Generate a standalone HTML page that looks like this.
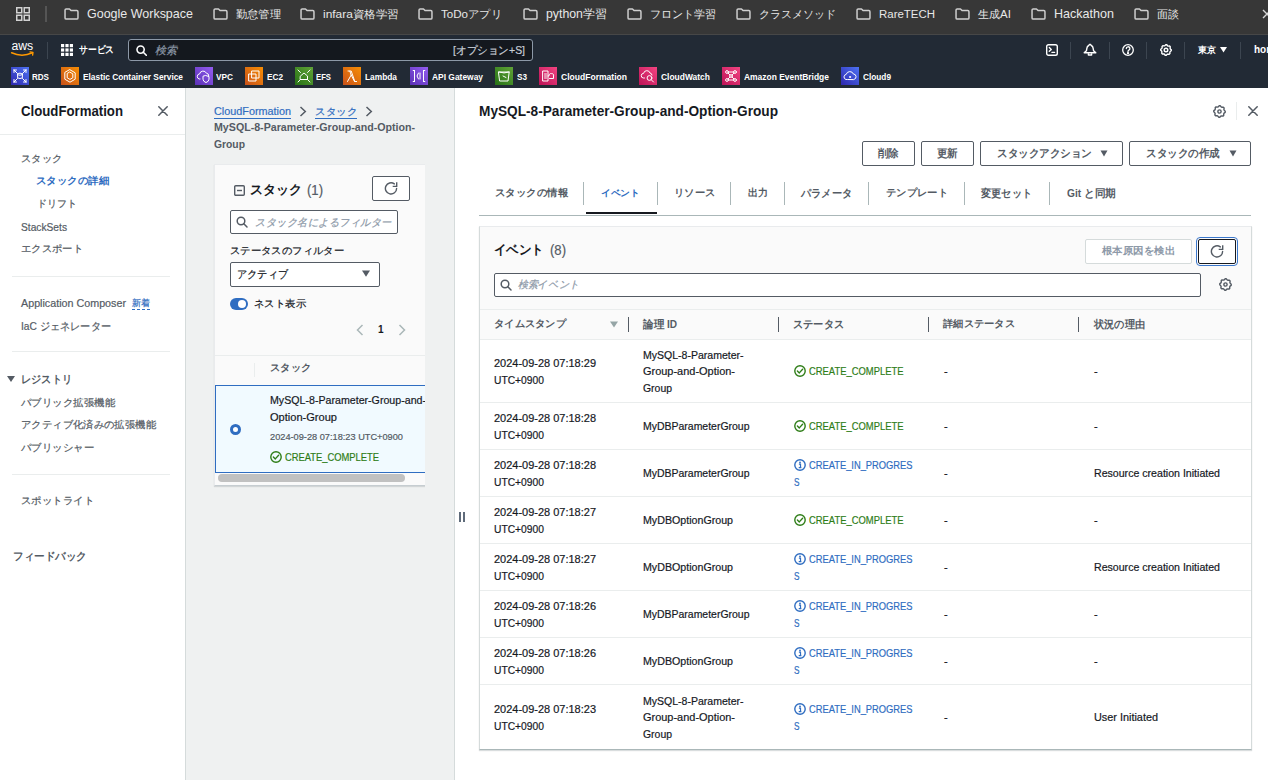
<!DOCTYPE html><html lang="ja"><head>
<meta charset="utf-8">
<style>
*{box-sizing:border-box;margin:0;padding:0}
html,body{width:1268px;height:780px;overflow:hidden;background:#fff;font-family:"Liberation Sans",sans-serif;color:#16191f}
.a{position:absolute;white-space:nowrap}
#chrome{position:absolute;left:0;top:0;width:1268px;height:35px;background:#373737}
#nav{position:absolute;left:0;top:35px;width:1268px;height:53px;background:#222a35}
.bm{position:absolute;top:1px;height:27px;line-height:27px;font-size:13px;color:#e8e8e8}
.fold{position:absolute;top:9px;width:16px;height:11px}
#side{position:absolute;left:0;top:88px;width:186px;height:692px;background:#fff;border-right:1px solid #d5dbdb}
#mid{position:absolute;left:186px;top:88px;width:269px;height:692px;background:#eff1f1}
#right{position:absolute;left:454px;top:88px;width:814px;height:692px;background:#fff;border-left:1px solid #d5dbdb}
.si{position:absolute;font-size:11px;color:#545b64;white-space:nowrap}
.btn{position:absolute;border:1px solid #545b64;background:#fff;font-size:11.5px;font-weight:bold;color:#545b64;text-align:center;border-radius:2px}
.tab{position:absolute;top:185px;font-size:12px;font-weight:bold;color:#545b64;white-space:nowrap}
.tdiv{position:absolute;top:182px;width:1px;height:23px;background:#aab7b8}
.th{position:absolute;top:317px;font-size:12px;font-weight:bold;color:#545b64;white-space:nowrap}
.hdiv{position:absolute;top:317px;width:1px;height:15px;background:#545b64}
.rl{position:absolute;left:479px;width:772px;height:1px;background:#eaeded}
.c1{position:absolute;left:494px;font-size:11px;line-height:17px;color:#16191f;white-space:nowrap}
.c2{position:absolute;left:643px;font-size:11px;line-height:17px;color:#16191f;white-space:nowrap}
.c3{position:absolute;left:793px;font-size:11px;line-height:17px;white-space:nowrap}
.c4{position:absolute;left:943px;font-size:11px;line-height:17px;color:#16191f}
.c5{position:absolute;left:1093px;font-size:11px;line-height:17px;color:#16191f;white-space:nowrap}
.a{-webkit-text-stroke:0.2px currentColor}
[style*="font-weight:bold"],[style*="font-weight: bold"]{-webkit-text-stroke:0}
.ok{color:#2e7d17}
.ip{color:#2f6dc1}
</style>
</head>
<body>
<!-- chrome bookmarks bar -->
<div id="chrome"><div class="a" style="left:0;top:34px;width:1268px;height:1px;background:#474747"></div><svg class="a" style="left:15px;top:6px" width="16" height="16" viewBox="0 0 16 16" fill="none" stroke="#d2d2d2" stroke-width="1.5"><rect x="1.75" y="1.75" width="5" height="5"></rect><rect x="9.25" y="1.75" width="5" height="5"></rect><rect x="1.75" y="9.25" width="5" height="5"></rect><rect x="9.25" y="9.25" width="5" height="5"></rect></svg><div class="a" style="left:45px;top:6px;width:2px;height:16px;background:#555"></div><svg class="a" style="left:63px;top:8px" width="17" height="12" viewBox="0 0 17 13"><path d="M1.5 2.2 Q1.5 1 2.7 1 H6.3 L8 2.8 H14.3 Q15.5 2.8 15.5 4 V10.8 Q15.5 12 14.3 12 H2.7 Q1.5 12 1.5 10.8 Z" fill="none" stroke="#cfcfcf" stroke-width="1.6" stroke-linejoin="round"></path></svg><div class="bm" style="left: 87px; font-size: 12.49px;">Google Workspace</div><svg class="a" style="left:212px;top:8px" width="17" height="12" viewBox="0 0 17 13"><path d="M1.5 2.2 Q1.5 1 2.7 1 H6.3 L8 2.8 H14.3 Q15.5 2.8 15.5 4 V10.8 Q15.5 12 14.3 12 H2.7 Q1.5 12 1.5 10.8 Z" fill="none" stroke="#cfcfcf" stroke-width="1.6" stroke-linejoin="round"></path></svg><div class="bm" style="left: 236px; font-size: 10.79px; transform: scaleX(1.0227); transform-origin: 0px 50%;">勤怠管理</div><svg class="a" style="left:299px;top:8px" width="17" height="12" viewBox="0 0 17 13"><path d="M1.5 2.2 Q1.5 1 2.7 1 H6.3 L8 2.8 H14.3 Q15.5 2.8 15.5 4 V10.8 Q15.5 12 14.3 12 H2.7 Q1.5 12 1.5 10.8 Z" fill="none" stroke="#cfcfcf" stroke-width="1.6" stroke-linejoin="round"></path></svg><div class="bm" style="left: 323px; font-size: 11.38px; transform: scaleX(1.0487); transform-origin: 0px 50%;">infara資格学習</div><svg class="a" style="left:417px;top:8px" width="17" height="12" viewBox="0 0 17 13"><path d="M1.5 2.2 Q1.5 1 2.7 1 H6.3 L8 2.8 H14.3 Q15.5 2.8 15.5 4 V10.8 Q15.5 12 14.3 12 H2.7 Q1.5 12 1.5 10.8 Z" fill="none" stroke="#cfcfcf" stroke-width="1.6" stroke-linejoin="round"></path></svg><div class="bm" style="left: 441px; font-size: 11.26px; transform: scaleX(1.0293); transform-origin: 0px 50%;">ToDoアプリ</div><svg class="a" style="left:522px;top:8px" width="17" height="12" viewBox="0 0 17 13"><path d="M1.5 2.2 Q1.5 1 2.7 1 H6.3 L8 2.8 H14.3 Q15.5 2.8 15.5 4 V10.8 Q15.5 12 14.3 12 H2.7 Q1.5 12 1.5 10.8 Z" fill="none" stroke="#cfcfcf" stroke-width="1.6" stroke-linejoin="round"></path></svg><div class="bm" style="left: 546px; font-size: 12.31px;">python学習</div><svg class="a" style="left:626px;top:8px" width="17" height="12" viewBox="0 0 17 13"><path d="M1.5 2.2 Q1.5 1 2.7 1 H6.3 L8 2.8 H14.3 Q15.5 2.8 15.5 4 V10.8 Q15.5 12 14.3 12 H2.7 Q1.5 12 1.5 10.8 Z" fill="none" stroke="#cfcfcf" stroke-width="1.6" stroke-linejoin="round"></path></svg><div class="bm" style="left: 650px; font-size: 11px;">フロント学習</div><svg class="a" style="left:735px;top:8px" width="17" height="12" viewBox="0 0 17 13"><path d="M1.5 2.2 Q1.5 1 2.7 1 H6.3 L8 2.8 H14.3 Q15.5 2.8 15.5 4 V10.8 Q15.5 12 14.3 12 H2.7 Q1.5 12 1.5 10.8 Z" fill="none" stroke="#cfcfcf" stroke-width="1.6" stroke-linejoin="round"></path></svg><div class="bm" style="left: 759px; font-size: 11px;">クラスメソッド</div><svg class="a" style="left:855px;top:8px" width="17" height="12" viewBox="0 0 17 13"><path d="M1.5 2.2 Q1.5 1 2.7 1 H6.3 L8 2.8 H14.3 Q15.5 2.8 15.5 4 V10.8 Q15.5 12 14.3 12 H2.7 Q1.5 12 1.5 10.8 Z" fill="none" stroke="#cfcfcf" stroke-width="1.6" stroke-linejoin="round"></path></svg><div class="bm" style="left: 879px; font-size: 11.46px;">RareTECH</div><svg class="a" style="left:954px;top:8px" width="17" height="12" viewBox="0 0 17 13"><path d="M1.5 2.2 Q1.5 1 2.7 1 H6.3 L8 2.8 H14.3 Q15.5 2.8 15.5 4 V10.8 Q15.5 12 14.3 12 H2.7 Q1.5 12 1.5 10.8 Z" fill="none" stroke="#cfcfcf" stroke-width="1.6" stroke-linejoin="round"></path></svg><div class="bm" style="left: 978px; font-size: 11.44px;">生成AI</div><svg class="a" style="left:1030px;top:8px" width="17" height="12" viewBox="0 0 17 13"><path d="M1.5 2.2 Q1.5 1 2.7 1 H6.3 L8 2.8 H14.3 Q15.5 2.8 15.5 4 V10.8 Q15.5 12 14.3 12 H2.7 Q1.5 12 1.5 10.8 Z" fill="none" stroke="#cfcfcf" stroke-width="1.6" stroke-linejoin="round"></path></svg><div class="bm" style="left: 1054px; font-size: 12.56px;">Hackathon</div><svg class="a" style="left:1133px;top:8px" width="17" height="12" viewBox="0 0 17 13"><path d="M1.5 2.2 Q1.5 1 2.7 1 H6.3 L8 2.8 H14.3 Q15.5 2.8 15.5 4 V10.8 Q15.5 12 14.3 12 H2.7 Q1.5 12 1.5 10.8 Z" fill="none" stroke="#cfcfcf" stroke-width="1.6" stroke-linejoin="round"></path></svg><div class="bm" style="left: 1157px; font-size: 11px;">面談</div><svg class="a" style="left:1262px;top:9px" width="10" height="10" viewBox="0 0 10 10" stroke="#d8d8d8" stroke-width="1.4"><path d="M1 1 L9 9 M9 1 L1 9"></path></svg></div>
<!-- aws nav -->
<div id="nav">
<svg class="a" style="left:10px;top:6px" width="26" height="18" viewBox="0 0 26 18"><text x="1.4" y="9.2" font-family="Liberation Sans" font-size="12.5" fill="#fff" textLength="21.8" lengthAdjust="spacingAndGlyphs">aws</text><path d="M1.6 11.8 Q12 16.6 22.4 11.8" fill="none" stroke="#f90" stroke-width="1.5" stroke-linecap="round"></path><path d="M20 10.9 L23 11.4 L22.6 14.2" fill="none" stroke="#f90" stroke-width="1.3" stroke-linecap="round" stroke-linejoin="round"></path></svg>
<div class="a" style="left:47px;top:7px;width:1px;height:17px;background:#3c4550"></div>
<svg class="a" style="left:61px;top:9px" width="12" height="12" viewBox="0 0 12 12" fill="#fff"><rect x="0" y="0" width="3.2" height="3.2"></rect><rect x="4.4" y="0" width="3.2" height="3.2"></rect><rect x="8.8" y="0" width="3.2" height="3.2"></rect><rect x="0" y="4.4" width="3.2" height="3.2"></rect><rect x="4.4" y="4.4" width="3.2" height="3.2"></rect><rect x="8.8" y="4.4" width="3.2" height="3.2"></rect><rect x="0" y="8.8" width="3.2" height="3.2"></rect><rect x="4.4" y="8.8" width="3.2" height="3.2"></rect><rect x="8.8" y="8.8" width="3.2" height="3.2"></rect></svg>
<div class="a" style="left: 79px; top: 7px; line-height: 16px; font-size: 10px; font-weight: bold; color: rgb(255, 255, 255); transform: scaleX(0.875); transform-origin: 0px 50%;">サービス</div>
<div class="a" style="left:128px;top:4px;width:405px;height:22px;background:#14181e;border:1px solid #8d99a8;border-radius:3px"></div>
<svg class="a" style="left:136px;top:10px" width="11" height="11" viewBox="0 0 11 11" fill="none" stroke="#fff" stroke-width="1.6"><circle cx="4.6" cy="4.6" r="3.6"></circle><path d="M7.3 7.3 L10.3 10.3" stroke-linecap="round"></path></svg>
<div class="a" style="left: 155px; top: 7px; line-height: 16px; font-size: 11px; font-style: italic; color: rgb(141, 153, 168); transform: scaleX(1); transform-origin: 0px 50%;">検索</div>
<div class="a" style="left: 453px; top: 7px; line-height: 16px; font-size: 10.79px; color: rgb(198, 204, 212); transform: scaleX(0.9666); transform-origin: 0px 50%;">[オプション+S]</div>
<svg class="a" style="left:1046px;top:9px" width="12" height="12" viewBox="0 0 12 12" fill="none" stroke="#fff" stroke-width="1.4"><rect x="0.7" y="0.7" width="10.6" height="10.6" rx="1.8"></rect><path d="M3.3 3.6 L5.3 5.4 L3.3 7.2 M6 8.4 H8.6" stroke-linecap="round" stroke-linejoin="round"></path></svg>
<div class="a" style="left:1070px;top:7px;width:1px;height:17px;background:#3c4550"></div>
<svg class="a" style="left:1083px;top:8px" width="14" height="14" viewBox="0 0 14 14" fill="none" stroke="#fff" stroke-width="1.4" stroke-linejoin="round"><path d="M7 1.2 L8.4 2.5 Q10 3.3 10.2 5.6 L10.6 7.8 L12.8 9.8 H1.2 L3.4 7.8 L3.8 5.6 Q4 3.3 5.6 2.5 Z"></path><path d="M5.4 10.2 V12 H8.6 V10.2"></path></svg>
<div class="a" style="left:1109px;top:7px;width:1px;height:17px;background:#3c4550"></div>
<svg class="a" style="left:1122px;top:9px" width="12" height="12" viewBox="0 0 12 12" fill="none" stroke="#fff" stroke-width="1.3"><circle cx="6" cy="6" r="5.3"></circle><path d="M4.3 4.6 A1.8 1.8 0 1 1 6.6 6.3 Q6 6.6 6 7.4 V7.6" stroke-linecap="round"></path><circle cx="6" cy="9.2" r="0.5" fill="#fff"></circle></svg>
<div class="a" style="left:1146px;top:7px;width:1px;height:17px;background:#3c4550"></div>
<svg class="a" style="left:1160px;top:9px" width="12" height="12" viewBox="0 0 12 12" fill="none" stroke="#fff" stroke-width="1.4"><path d="M5.74 0.71 L6.78 0.76 L7.52 1.76 L8.31 2.14 L9.56 2.07 L10.26 2.84 L10.07 4.08 L10.37 4.91 L11.29 5.74 L11.24 6.78 L10.24 7.52 L9.86 8.31 L9.93 9.56 L9.16 10.26 L7.92 10.07 L7.09 10.37 L6.26 11.29 L5.22 11.24 L4.48 10.24 L3.69 9.86 L2.44 9.93 L1.74 9.16 L1.93 7.92 L1.63 7.09 L0.71 6.26 L0.76 5.22 L1.76 4.48 L2.14 3.69 L2.07 2.44 L2.84 1.74 L4.08 1.93 L4.91 1.63 Z" stroke-linejoin="round"></path><circle cx="6" cy="6" r="1.8"></circle></svg>
<div class="a" style="left:1184px;top:7px;width:1px;height:17px;background:#3c4550"></div>
<div class="a" style="left:1198px;top:7px;line-height:16px;font-size:9px;font-weight:bold;color:#fff">東京</div>
<svg class="a" style="left:1220px;top:12px" width="7" height="6" viewBox="0 0 7 6" fill="#fff"><path d="M0 0 H7 L3.5 5.5Z"></path></svg>
<div class="a" style="left:1240px;top:7px;width:1px;height:17px;background:#3c4550"></div>
<div class="a" style="left:1254px;top:7px;line-height:16px;font-size:10px;font-weight:bold;color:#fff">hor</div>
<svg class="a" style="left:11px;top:32px" width="18" height="18" viewBox="0 0 18 18"><defs><linearGradient id="g0" x1="0" y1="1" x2="1" y2="0"><stop offset="0" stop-color="#2e27ad"></stop><stop offset="1" stop-color="#4d72f3"></stop></linearGradient></defs><rect width="18" height="18" fill="url(#g0)"></rect><g fill="none" stroke="#fff" stroke-width="1" stroke-linecap="round" stroke-linejoin="round"><path d="M3 3 L6.5 6.5 M3 3 H5.5 M3 3 V5.5 M15 3 L11.5 6.5 M15 3 H12.5 M15 3 V5.5 M3 15 L6.5 11.5 M3 15 H5.5 M3 15 V12.5 M15 15 L11.5 11.5 M15 15 H12.5 M15 15 V12.5"></path><ellipse cx="9" cy="7.2" rx="2.4" ry="1"></ellipse><path d="M6.6 7.2 V10.8 Q9 12.3 11.4 10.8 V7.2"></path></g></svg><div class="a" style="left: 32px; top: 33px; line-height: 17px; font-size: 9.6px; font-weight: bold; color: rgb(255, 255, 255); transform: scaleX(0.8389); transform-origin: 0px 50%;">RDS</div><svg class="a" style="left:61px;top:32px" width="18" height="18" viewBox="0 0 18 18"><defs><linearGradient id="g1" x1="0" y1="1" x2="1" y2="0"><stop offset="0" stop-color="#c8511b"></stop><stop offset="1" stop-color="#f78e04"></stop></linearGradient></defs><rect width="18" height="18" fill="url(#g1)"></rect><g fill="none" stroke="#fff" stroke-width="1" stroke-linecap="round" stroke-linejoin="round"><path d="M9 2.8 L14.2 5.8 V12.2 L9 15.2 L3.8 12.2 V5.8 Z"></path><path d="M9 5.2 L11.8 6.8 V10.8 L9 12.4 L6.2 10.8 V6.8 Z"></path></g></svg><div class="a" style="left: 83px; top: 33px; line-height: 17px; font-size: 9.6px; font-weight: bold; color: rgb(255, 255, 255); transform: scaleX(0.8681); transform-origin: 0px 50%;">Elastic Container Service</div><svg class="a" style="left:195px;top:32px" width="18" height="18" viewBox="0 0 18 18"><defs><linearGradient id="g2" x1="0" y1="1" x2="1" y2="0"><stop offset="0" stop-color="#5a30b5"></stop><stop offset="1" stop-color="#945df2"></stop></linearGradient></defs><rect width="18" height="18" fill="url(#g2)"></rect><g fill="none" stroke="#fff" stroke-width="1" stroke-linecap="round" stroke-linejoin="round"><path d="M5 12 H4.2 A2.6 2.6 0 0 1 4.6 6.9 A3.6 3.6 0 0 1 11.4 6.2 A2.6 2.6 0 0 1 13.8 9"></path><path d="M11 8.6 L14 9.6 V12.2 Q14 14.4 11 15.6 Q8 14.4 8 12.2 V9.6 Z"></path></g></svg><div class="a" style="left: 216px; top: 33px; line-height: 17px; font-size: 9.6px; font-weight: bold; color: rgb(255, 255, 255); transform: scaleX(0.8614); transform-origin: 0px 50%;">VPC</div><svg class="a" style="left:245px;top:32px" width="18" height="18" viewBox="0 0 18 18"><defs><linearGradient id="g3" x1="0" y1="1" x2="1" y2="0"><stop offset="0" stop-color="#c8511b"></stop><stop offset="1" stop-color="#f78e04"></stop></linearGradient></defs><rect width="18" height="18" fill="url(#g3)"></rect><g fill="none" stroke="#fff" stroke-width="1" stroke-linecap="round" stroke-linejoin="round"><rect x="4" y="7" width="7" height="7"></rect><rect x="7" y="4" width="7" height="7"></rect></g></svg><div class="a" style="left: 267px; top: 33px; line-height: 17px; font-size: 9.6px; font-weight: bold; color: rgb(255, 255, 255); transform: scaleX(0.8569); transform-origin: 0px 50%;">EC2</div><svg class="a" style="left:294.5px;top:32px" width="18" height="18" viewBox="0 0 18 18"><defs><linearGradient id="g4" x1="0" y1="1" x2="1" y2="0"><stop offset="0" stop-color="#277116"></stop><stop offset="1" stop-color="#60a337"></stop></linearGradient></defs><rect width="18" height="18" fill="url(#g4)"></rect><g fill="none" stroke="#fff" stroke-width="1" stroke-linecap="round" stroke-linejoin="round"><path d="M3 3 L5.5 5.5 M15 3 L12.5 5.5 M3 15 L5.5 12.5 M15 15 L12.5 12.5"></path><path d="M5.5 9 L9 6 L12.5 9 V12.5 H5.5 Z"></path></g></svg><div class="a" style="left: 316px; top: 33px; line-height: 17px; font-size: 9.6px; font-weight: bold; color: rgb(255, 255, 255); transform: scaleX(0.8033); transform-origin: 0px 50%;">EFS</div><svg class="a" style="left:343px;top:32px" width="18" height="18" viewBox="0 0 18 18"><defs><linearGradient id="g5" x1="0" y1="1" x2="1" y2="0"><stop offset="0" stop-color="#c8511b"></stop><stop offset="1" stop-color="#f78e04"></stop></linearGradient></defs><rect width="18" height="18" fill="url(#g5)"></rect><g fill="none" stroke="#fff" stroke-width="1" stroke-linecap="round" stroke-linejoin="round"><path d="M4.5 14.5 L8.2 8 L6.8 4 H5 M8.2 8 L11.5 14.5 H13.6 M6.8 4 H8.2 L11.8 14.5"></path></g></svg><div class="a" style="left: 365px; top: 33px; line-height: 17px; font-size: 9.6px; font-weight: bold; color: rgb(255, 255, 255); transform: scaleX(0.8696); transform-origin: 0px 50%;">Lambda</div><svg class="a" style="left:410px;top:32px" width="18" height="18" viewBox="0 0 18 18"><defs><linearGradient id="g6" x1="0" y1="1" x2="1" y2="0"><stop offset="0" stop-color="#5a30b5"></stop><stop offset="1" stop-color="#945df2"></stop></linearGradient></defs><rect width="18" height="18" fill="url(#g6)"></rect><g fill="none" stroke="#fff" stroke-width="1" stroke-linecap="round" stroke-linejoin="round"><path d="M4.5 3.5 V14.5 M13.5 3.5 V14.5 M3.2 3.5 H4.5 M3.2 14.5 H4.5 M13.5 3.5 H14.8 M13.5 14.5 H14.8 M8.5 6 L7 9 L8.5 12 M10 6 V12"></path></g></svg><div class="a" style="left: 432px; top: 33px; line-height: 17px; font-size: 9.6px; font-weight: bold; color: rgb(255, 255, 255); transform: scaleX(0.8774); transform-origin: 0px 50%;">API Gateway</div><svg class="a" style="left:495px;top:32px" width="18" height="18" viewBox="0 0 18 18"><defs><linearGradient id="g7" x1="0" y1="1" x2="1" y2="0"><stop offset="0" stop-color="#277116"></stop><stop offset="1" stop-color="#60a337"></stop></linearGradient></defs><rect width="18" height="18" fill="url(#g7)"></rect><g fill="none" stroke="#fff" stroke-width="1" stroke-linecap="round" stroke-linejoin="round"><path d="M3.8 5 H14.2 L13 14 H5 Z M3.8 5 Q9 7 14.2 5"></path><path d="M8 9 L11 10.5"></path></g></svg><div class="a" style="left: 517px; top: 33px; line-height: 17px; font-size: 9.6px; font-weight: bold; color: rgb(255, 255, 255); transform: scaleX(0.8511); transform-origin: 0px 50%;">S3</div><svg class="a" style="left:539px;top:32px" width="18" height="18" viewBox="0 0 18 18"><defs><linearGradient id="g8" x1="0" y1="1" x2="1" y2="0"><stop offset="0" stop-color="#bc1356"></stop><stop offset="1" stop-color="#f34482"></stop></linearGradient></defs><rect width="18" height="18" fill="url(#g8)"></rect><g fill="none" stroke="#fff" stroke-width="1" stroke-linecap="round" stroke-linejoin="round"><path d="M4 4 H9 V14 H4 Z M5.5 7 H7.5 M5.5 9 H7.5 M5.5 11 H7.5"></path><path d="M9 9 H10 A2 2 0 0 1 12.4 6.6 A1.8 1.8 0 0 1 14.5 9 V11.5 H10.5"></path></g></svg><div class="a" style="left: 561px; top: 33px; line-height: 17px; font-size: 9.6px; font-weight: bold; color: rgb(255, 255, 255); transform: scaleX(0.891); transform-origin: 0px 50%;">CloudFormation</div><svg class="a" style="left:639px;top:32px" width="18" height="18" viewBox="0 0 18 18"><defs><linearGradient id="g9" x1="0" y1="1" x2="1" y2="0"><stop offset="0" stop-color="#bc1356"></stop><stop offset="1" stop-color="#f34482"></stop></linearGradient></defs><rect width="18" height="18" fill="url(#g9)"></rect><g fill="none" stroke="#fff" stroke-width="1" stroke-linecap="round" stroke-linejoin="round"><path d="M5.5 11 H4.5 A2.3 2.3 0 0 1 4.6 6.4 A3.3 3.3 0 0 1 11 6 A2.3 2.3 0 0 1 13 8"></path><circle cx="10.5" cy="11" r="2.4"></circle><path d="M12.2 12.7 L14.5 15"></path></g></svg><div class="a" style="left: 661px; top: 33px; line-height: 17px; font-size: 9.6px; font-weight: bold; color: rgb(255, 255, 255); transform: scaleX(0.8811); transform-origin: 0px 50%;">CloudWatch</div><svg class="a" style="left:722px;top:32px" width="18" height="18" viewBox="0 0 18 18"><defs><linearGradient id="g10" x1="0" y1="1" x2="1" y2="0"><stop offset="0" stop-color="#bc1356"></stop><stop offset="1" stop-color="#f34482"></stop></linearGradient></defs><rect width="18" height="18" fill="url(#g10)"></rect><g fill="none" stroke="#fff" stroke-width="1" stroke-linecap="round" stroke-linejoin="round"><circle cx="5" cy="5" r="1.4"></circle><circle cx="13" cy="5" r="1.4"></circle><circle cx="5" cy="13" r="1.4"></circle><circle cx="13" cy="13" r="1.4"></circle><circle cx="9" cy="9" r="1.4"></circle><path d="M6 6 L8 8 M12 6 L10 8 M6 12 L8 10 M12 12 L10 10 M6.4 5 H11.6 M6.4 13 H11.6"></path></g></svg><div class="a" style="left: 744px; top: 33px; line-height: 17px; font-size: 9.6px; font-weight: bold; color: rgb(255, 255, 255); transform: scaleX(0.8808); transform-origin: 0px 50%;">Amazon EventBridge</div><svg class="a" style="left:841px;top:32px" width="18" height="18" viewBox="0 0 18 18"><defs><linearGradient id="g11" x1="0" y1="1" x2="1" y2="0"><stop offset="0" stop-color="#2e27ad"></stop><stop offset="1" stop-color="#4d72f3"></stop></linearGradient></defs><rect width="18" height="18" fill="url(#g11)"></rect><g fill="none" stroke="#fff" stroke-width="1" stroke-linecap="round" stroke-linejoin="round"><path d="M6 12.5 H5 A2.6 2.6 0 0 1 5.2 7.4 A3.8 3.8 0 0 1 12.4 7 A2.8 2.8 0 0 1 13 12.5 Z"></path><circle cx="9" cy="10" r="0.6"></circle></g></svg><div class="a" style="left: 863px; top: 33px; line-height: 17px; font-size: 9.6px; font-weight: bold; color: rgb(255, 255, 255); transform: scaleX(0.8611); transform-origin: 0px 50%;">Cloud9</div></div>
<!-- sidebar -->
<div id="side">
<div class="a" style="left: 21px; top: 14px; line-height: 18px; font-size: 14px; font-weight: bold; color: rgb(22, 25, 31); transform: scaleX(0.9435); transform-origin: 0px 50%;">CloudFormation</div>
<svg class="a" style="left:158px;top:18px" width="10" height="10" viewBox="0 0 10 10" stroke="#545b64" stroke-width="1.5" stroke-linecap="round"><path d="M0.8 0.8 L9.2 9.2 M9.2 0.8 L0.8 9.2"></path></svg>
<div class="a" style="left:0;top:46px;width:185px;height:1px;background:#eaeded"></div>
<div class="a" style="left: 21px; top: 63px; line-height: 16px; font-size: 9.79px; color: rgb(84, 91, 100); transform: scaleX(1.025); transform-origin: 0px 50%;">スタック</div>
<div class="a" style="left: 36px; top: 85px; line-height: 16px; font-size: 10.31px; font-weight: bold; color: rgb(47, 109, 193); transform: scaleX(1.0429); transform-origin: 0px 50%;">スタックの詳細</div>
<div class="a" style="left:37px;top:108px;line-height:16px;font-size:10px;color:#545b64">ドリフト</div>
<div class="a" style="left: 21px; top: 131px; line-height: 16px; font-size: 11px; color: rgb(84, 91, 100); transform: scaleX(0.9287); transform-origin: 0px 50%;">StackSets</div>
<div class="a" style="left: 21px; top: 153px; line-height: 16px; font-size: 10.03px; color: rgb(84, 91, 100); transform: scaleX(1.0333); transform-origin: 0px 50%;">エクスポート</div>
<div class="a" style="left:12px;top:188px;width:158px;height:1px;background:#eaeded"></div>
<div class="a" style="left: 21px; top: 207px; line-height: 16px; font-size: 11px; color: rgb(84, 91, 100); transform: scaleX(0.9756); transform-origin: 0px 50%;">Application Composer</div>
<div class="a" style="left:132px;top:207px;line-height:16px;font-size:9px;color:#2f6dc1">新着</div>
<div class="a" style="left:132px;top:221px;width:18px;height:0;border-top:1px dashed #2f6dc1"></div>
<div class="a" style="left: 21px; top: 230px; line-height: 16px; font-size: 11px; color: rgb(84, 91, 100); transform: scaleX(0.926); transform-origin: 0px 50%;">IaC ジェネレーター</div>
<div class="a" style="left:12px;top:263px;width:158px;height:1px;background:#eaeded"></div>
<svg class="a" style="left:7px;top:288px" width="8" height="6" viewBox="0 0 8 6" fill="#545b64"><path d="M0 0 H8 L4 6Z"></path></svg>
<div class="a" style="left: 21px; top: 283px; line-height: 16px; font-size: 10.61px; font-weight: bold; color: rgb(84, 91, 100); transform: scaleX(0.9273); transform-origin: 0px 50%;">レジストリ</div>
<div class="a" style="left: 21px; top: 307px; line-height: 16px; font-size: 10.36px; color: rgb(84, 91, 100); transform: scaleX(1.0444); transform-origin: 0px 50%;">パブリック拡張機能</div>
<div class="a" style="left: 21px; top: 329px; line-height: 16px; font-size: 10.18px; color: rgb(84, 91, 100); transform: scaleX(1.0385); transform-origin: 0px 50%;">アクティブ化済みの拡張機能</div>
<div class="a" style="left: 21px; top: 352px; line-height: 16px; font-size: 10.31px; color: rgb(84, 91, 100); transform: scaleX(1.0429); transform-origin: 0px 50%;">パブリッシャー</div>
<div class="a" style="left:12px;top:386px;width:158px;height:1px;background:#eaeded"></div>
<div class="a" style="left: 21px; top: 405px; line-height: 16px; font-size: 10.31px; color: rgb(84, 91, 100); transform: scaleX(1.0429); transform-origin: 0px 50%;">スポットライト</div>
<div class="a" style="left: 13px; top: 460px; line-height: 16px; font-size: 10.74px; font-weight: bold; color: rgb(84, 91, 100); transform: scaleX(0.961); transform-origin: 0px 50%;">フィードバック</div>
</div>
<div id="mid"></div>
<div class="a" style="left: 214px; top: 103px; line-height: 17px; font-size: 11.5px; color: rgb(47, 109, 193); transform: scaleX(0.941); transform-origin: 0px 50%;">CloudFormation</div>
<div class="a" style="left:214px;top:118px;width:77px;height:1px;background:#2f6dc1"></div>
<svg class="a" style="left:299px;top:106px" width="8" height="11" viewBox="0 0 8 11" fill="none" stroke="#545b64" stroke-width="1.5"><path d="M1.5 1 L6.3 5.5 L1.5 10"></path></svg>
<div class="a" style="left: 315px; top: 103px; line-height: 17px; font-size: 10.05px; color: rgb(47, 109, 193); transform: scaleX(1.05); transform-origin: 0px 50%;">スタック</div>
<div class="a" style="left:315px;top:118px;width:42px;height:1px;background:#2f6dc1"></div>
<svg class="a" style="left:365px;top:106px" width="8" height="11" viewBox="0 0 8 11" fill="none" stroke="#545b64" stroke-width="1.5"><path d="M1.5 1 L6.3 5.5 L1.5 10"></path></svg>
<div class="a" style="left: 214px; top: 119px; line-height: 17px; font-size: 11px; font-weight: bold; color: rgb(84, 91, 100); transform: scaleX(0.9673); transform-origin: 0px 50%;">MySQL-8-Parameter-Group-and-Option-</div>
<div class="a" style="left: 214px; top: 136px; line-height: 17px; font-size: 11px; font-weight: bold; color: rgb(84, 91, 100); transform: scaleX(0.9394); transform-origin: 0px 50%;">Group</div>
<div class="a" style="left:214px;top:164px;width:212px;height:322px;background:#fafafa;border:1px solid #e9ebed;border-right-color:#d5dbdb;border-bottom-color:#c6cdd1;box-shadow:0 1px 1px rgba(0,28,36,.12);overflow:hidden">
</div>
<svg class="a" style="left:234px;top:185px" width="11" height="11" viewBox="0 0 11 11" fill="none" stroke="#545b64" stroke-width="1.4"><rect x="0.7" y="0.7" width="9.6" height="9.6" rx="1"></rect><path d="M3 5.5 H8"></path></svg>
<div class="a" style="left: 250px; top: 180px; line-height: 20px; font-size: 13px; font-weight: bold; color: rgb(22, 25, 31);">スタック</div>
<div class="a" style="left: 307px; top: 180px; line-height: 20px; font-size: 14px; color: rgb(84, 91, 100); transform: scaleX(0.9343); transform-origin: 0px 50%;">(1)</div>
<div class="a" style="left:372px;top:176px;width:38px;height:25px;border:1px solid #545b64;background:#fff;border-radius:2px"></div>
<svg class="a" style="left:384px;top:181px" width="14" height="14" viewBox="0 0 14 14" fill="none" stroke="#545b64" stroke-width="1.4"><path d="M12.6 7.5 A5.6 5.6 0 1 1 10.3 2.9" stroke-linecap="round"></path><path d="M12.7 1.2 V5.4 H8.7" stroke-linejoin="miter" stroke-linecap="butt"></path></svg>
<div class="a" style="left:230px;top:210px;width:168px;height:24px;border:1px solid #545b64;background:#fff;border-radius:2px"></div>
<svg class="a" style="left:236px;top:216px" width="12" height="12" viewBox="0 0 12 12" fill="none" stroke="#545b64" stroke-width="1.5"><circle cx="5" cy="5" r="3.8"></circle><path d="M7.8 7.8 L11 11" stroke-linecap="round"></path></svg>
<div class="a" style="left: 255px; top: 214px; line-height: 16px; font-size: 10.64px; font-style: italic; color: rgb(141, 153, 168); transform: scaleX(0.958); transform-origin: 0px 50%;">スタック名によるフィルター</div>
<div class="a" style="left: 230px; top: 243px; line-height: 16px; font-size: 10.12px; color: rgb(22, 25, 31); transform: scaleX(1.0364); transform-origin: 0px 50%;">ステータスのフィルター</div>
<div class="a" style="left:230px;top:262px;width:150px;height:25px;border:1px solid #545b64;background:#fff;border-radius:2px"></div>
<div class="a" style="left: 237px; top: 266px; line-height: 16px; font-size: 10.61px; color: rgb(22, 25, 31); transform: scaleX(0.9273); transform-origin: 0px 50%;">アクティブ</div>
<svg class="a" style="left:362px;top:270px" width="8" height="7" viewBox="0 0 8 7" fill="#545b64"><path d="M0 0.5 H8 L4 6.8Z"></path></svg>
<div class="a" style="left:230px;top:298px;width:18px;height:12px;border-radius:6px;background:#2f6dc1"></div>
<div class="a" style="left:238px;top:300px;width:8px;height:8px;border-radius:4px;background:#fff"></div>
<div class="a" style="left: 254px; top: 296px; line-height: 16px; font-size: 10.23px; color: rgb(22, 25, 31); transform: scaleX(1.04); transform-origin: 0px 50%;">ネスト表示</div>
<svg class="a" style="left:356px;top:324px" width="8" height="12" viewBox="0 0 8 12" fill="none" stroke="#aab7b8" stroke-width="1.5"><path d="M6.5 1 L1.5 6 L6.5 11"></path></svg>
<div class="a" style="left:378px;top:322px;line-height:16px;font-size:10px;font-weight:bold;color:#16191f">1</div>
<svg class="a" style="left:398px;top:324px" width="8" height="12" viewBox="0 0 8 12" fill="none" stroke="#aab7b8" stroke-width="1.5"><path d="M1.5 1 L6.5 6 L1.5 11"></path></svg>
<div class="a" style="left:215px;top:355px;width:210px;height:1px;background:#eaeded"></div>
<div class="a" style="left:254px;top:363px;width:1px;height:14px;background:#eaeded"></div>
<div class="a" style="left: 270px; top: 360px; line-height: 16px; font-size: 9.79px; font-weight: bold; color: rgb(84, 91, 100); transform: scaleX(1.025); transform-origin: 0px 50%;">スタック</div>
<div class="a" style="left:215px;top:385px;width:215px;height:88px;background:#f1faff;border:1px solid #2f6dc1;border-right:none"></div>
<div class="a" style="left:230px;top:424px;width:10.5px;height:10.5px;border-radius:5.5px;border:3.6px solid #2f6dc1;background:#fff"></div>
<div class="a" style="left: 270px; top: 392px; line-height: 17px; font-size: 11px; color: rgb(22, 25, 31); transform: scaleX(0.9666); transform-origin: 0px 50%;">MySQL-8-Parameter-Group-and-</div>
<div class="a" style="left: 270px; top: 409px; line-height: 17px; font-size: 11px; color: rgb(22, 25, 31); transform: scaleX(1.0052); transform-origin: 0px 50%;">Option-Group</div>
<div class="a" style="left: 270px; top: 429px; line-height: 16px; font-size: 9.5px; color: rgb(84, 91, 100); transform: scaleX(0.9704); transform-origin: 0px 50%;">2024-09-28 07:18:23 UTC+0900</div>
<svg class="a" style="left:270px;top:451px" width="12" height="12" viewBox="0 0 12 12" fill="none" stroke="#2e7d17" stroke-width="1.4"><circle cx="6" cy="6" r="5.2"></circle><path d="M3.4 6.1 L5.3 7.9 L8.6 4.3" stroke-linecap="round" stroke-linejoin="round"></path></svg>
<div class="a" style="left: 285px; top: 449px; line-height: 16px; font-size: 11px; color: rgb(46, 125, 23); transform: scaleX(0.8512); transform-origin: 0px 50%;">CREATE_COMPLETE</div>
<div class="a" style="left:218px;top:474px;width:187px;height:8px;border-radius:4px;background:#c1c1c1"></div>
<div class="a" style="left:425px;top:88px;width:29px;height:692px;background:#eff1f1"></div>

<div id="right"></div>
<div class="a" style="left: 479px; top: 102px; line-height: 18px; font-size: 14px; font-weight: bold; color: rgb(22, 25, 31); transform: scaleX(0.9757); transform-origin: 0px 50%;">MySQL-8-Parameter-Group-and-Option-Group</div>
<svg class="a" style="left:1213px;top:105px" width="13" height="13" viewBox="0 0 12 12" fill="none" stroke="#545b64" stroke-width="1.3"><path d="M5.74 0.71 L6.78 0.76 L7.52 1.76 L8.31 2.14 L9.56 2.07 L10.26 2.84 L10.07 4.08 L10.37 4.91 L11.29 5.74 L11.24 6.78 L10.24 7.52 L9.86 8.31 L9.93 9.56 L9.16 10.26 L7.92 10.07 L7.09 10.37 L6.26 11.29 L5.22 11.24 L4.48 10.24 L3.69 9.86 L2.44 9.93 L1.74 9.16 L1.93 7.92 L1.63 7.09 L0.71 6.26 L0.76 5.22 L1.76 4.48 L2.14 3.69 L2.07 2.44 L2.84 1.74 L4.08 1.93 L4.91 1.63 Z" stroke-linejoin="round"></path><circle cx="6" cy="6" r="1.5"></circle></svg>
<div class="a" style="left:1236px;top:102px;width:1px;height:18px;background:#eaeded"></div>
<svg class="a" style="left:1248px;top:106px" width="10" height="10" viewBox="0 0 10 10" stroke="#545b64" stroke-width="1.5" stroke-linecap="round"><path d="M0.8 0.8 L9.2 9.2 M9.2 0.8 L0.8 9.2"></path></svg>
<div class="btn" style="left:862px;top:141px;width:53px;height:25px"></div>
<div class="a" style="left: 878px; top: 145px; line-height: 16px; font-size: 10.52px; font-weight: bold; color: rgb(84, 91, 100); transform: scaleX(0.9545); transform-origin: 0px 50%;">削除</div>
<div class="btn" style="left:921px;top:141px;width:53px;height:25px"></div>
<div class="a" style="left: 937px; top: 145px; line-height: 16px; font-size: 10.52px; font-weight: bold; color: rgb(84, 91, 100); transform: scaleX(0.9545); transform-origin: 0px 50%;">更新</div>
<div class="btn" style="left:980px;top:141px;width:143px;height:25px"></div>
<div class="a" style="left: 997px; top: 145px; line-height: 16px; font-size: 10.69px; font-weight: bold; color: rgb(84, 91, 100); transform: scaleX(0.9596); transform-origin: 0px 50%;">スタックアクション</div>
<svg class="a" style="left:1100px;top:150px" width="8" height="7" viewBox="0 0 8 7" fill="#545b64"><path d="M0.5 0.5 H7.5 L4 6.5Z"></path></svg>
<div class="btn" style="left:1129px;top:141px;width:122px;height:25px"></div>
<div class="a" style="left: 1146px; top: 145px; line-height: 16px; font-size: 10.74px; font-weight: bold; color: rgb(84, 91, 100); transform: scaleX(0.961); transform-origin: 0px 50%;">スタックの作成</div>
<svg class="a" style="left:1228.5px;top:150px" width="8" height="7" viewBox="0 0 8 7" fill="#545b64"><path d="M0.5 0.5 H7.5 L4 6.5Z"></path></svg>
<div class="a" style="left: 495px; top: 185px; line-height: 16px; font-size: 10.31px; font-weight: bold; color: rgb(84, 91, 100); transform: scaleX(1.0429); transform-origin: 0px 50%;">スタックの情報</div>
<div class="tdiv" style="left:583px"></div>
<div class="a" style="left: 601px; top: 185px; line-height: 16px; font-size: 9.27px; font-weight: bold; color: rgb(47, 109, 193); transform: scaleX(1.0833); transform-origin: 0px 50%;">イベント</div>
<div class="a" style="left:586px;top:212px;width:71px;height:2px;background:#16191f"></div>
<div class="tdiv" style="left:657px"></div>
<div class="a" style="left: 674px; top: 185px; line-height: 16px; font-size: 9.79px; font-weight: bold; color: rgb(84, 91, 100); transform: scaleX(1.025); transform-origin: 0px 50%;">リソース</div>
<div class="tdiv" style="left:730px"></div>
<div class="a" style="left:748px;top:185px;line-height:16px;font-size:10px;font-weight:bold;color:#545b64">出力</div>
<div class="tdiv" style="left:784px"></div>
<div class="a" style="left: 801px; top: 185px; line-height: 16px; font-size: 10.61px; font-weight: bold; color: rgb(84, 91, 100); transform: scaleX(0.9273); transform-origin: 0px 50%;">パラメータ</div>
<div class="tdiv" style="left:868px"></div>
<div class="a" style="left: 886px; top: 185px; line-height: 16px; font-size: 10.03px; font-weight: bold; color: rgb(84, 91, 100); transform: scaleX(1.0333); transform-origin: 0px 50%;">テンプレート</div>
<div class="tdiv" style="left:964px"></div>
<div class="a" style="left: 981px; top: 185px; line-height: 16px; font-size: 10.61px; font-weight: bold; color: rgb(84, 91, 100); transform: scaleX(0.9273); transform-origin: 0px 50%;">変更セット</div>
<div class="tdiv" style="left:1049px"></div>
<div class="a" style="left: 1067px; top: 185px; line-height: 16px; font-size: 10.5px; font-weight: bold; color: rgb(84, 91, 100); transform: scaleX(0.9703); transform-origin: 0px 50%;">Git と同期</div>
<div class="a" style="left:479px;top:215px;width:772px;height:1px;background:#aab7b8"></div>
<div class="a" style="left:479px;top:226px;width:773px;height:524px;background:#fff;border:1px solid #d5dbdb;border-top-color:#e9ebed;border-bottom-color:#aab7b8;box-shadow:0 1px 1px rgba(0,28,36,.15)"></div>
<div class="a" style="left:480px;top:227px;width:771px;height:112px;background:#fafafa"></div>
<div class="a" style="left:480px;top:309px;width:771px;height:1px;background:#eaeded"></div>
<div class="a" style="left: 494px; top: 240px; line-height: 20px; font-size: 12.52px; font-weight: bold; color: rgb(22, 25, 31); transform: scaleX(0.9615); transform-origin: 0px 50%;">イベント</div>
<div class="a" style="left: 550px; top: 240px; line-height: 20px; font-size: 14px; color: rgb(84, 91, 100); transform: scaleX(0.9343); transform-origin: 0px 50%;">(8)</div>
<div class="a" style="left:1085px;top:239px;width:107px;height:25px;border:1px solid #d5dbdb;background:#fff;border-radius:2px"></div>
<div class="a" style="left: 1102px; top: 243px; line-height: 16px; font-size: 10.31px; font-weight: bold; color: rgb(141, 153, 168); transform: scaleX(1.0429); transform-origin: 0px 50%;">根本原因を検出</div>
<div class="a" style="left:1196px;top:237px;width:42px;height:29px;border:1.5px solid #3a77cc;border-radius:4px"></div>
<div class="a" style="left:1198px;top:239px;width:38px;height:25px;border:1px solid #16191f;background:#fff;border-radius:2px"></div>
<svg class="a" style="left:1210px;top:244px" width="14" height="14" viewBox="0 0 14 14" fill="none" stroke="#545b64" stroke-width="1.4"><path d="M12.6 7.5 A5.6 5.6 0 1 1 10.3 2.9" stroke-linecap="round"></path><path d="M12.7 1.2 V5.4 H8.7" stroke-linejoin="miter" stroke-linecap="butt"></path></svg>
<div class="a" style="left:494px;top:273px;width:707px;height:24px;border:1px solid #545b64;background:#fff;border-radius:2px"></div>
<svg class="a" style="left:500px;top:279px" width="12" height="12" viewBox="0 0 12 12" fill="none" stroke="#545b64" stroke-width="1.5"><circle cx="5" cy="5" r="3.8"></circle><path d="M7.8 7.8 L11 11" stroke-linecap="round"></path></svg>
<div class="a" style="left: 518px; top: 277px; line-height: 16px; font-size: 10.34px; font-style: italic; color: rgb(141, 153, 168); transform: scaleX(0.9688); transform-origin: 0px 50%;">検索イベント</div>
<svg class="a" style="left:1219px;top:278px" width="13" height="13" viewBox="0 0 12 12" fill="none" stroke="#545b64" stroke-width="1.3"><path d="M5.74 0.71 L6.78 0.76 L7.52 1.76 L8.31 2.14 L9.56 2.07 L10.26 2.84 L10.07 4.08 L10.37 4.91 L11.29 5.74 L11.24 6.78 L10.24 7.52 L9.86 8.31 L9.93 9.56 L9.16 10.26 L7.92 10.07 L7.09 10.37 L6.26 11.29 L5.22 11.24 L4.48 10.24 L3.69 9.86 L2.44 9.93 L1.74 9.16 L1.93 7.92 L1.63 7.09 L0.71 6.26 L0.76 5.22 L1.76 4.48 L2.14 3.69 L2.07 2.44 L2.84 1.74 L4.08 1.93 L4.91 1.63 Z" stroke-linejoin="round"></path><circle cx="6" cy="6" r="1.5"></circle></svg>
<div class="a" style="left: 494px; top: 316px; line-height: 16px; font-size: 9.89px; font-weight: bold; color: rgb(84, 91, 100); transform: scaleX(1.0286); transform-origin: 0px 50%;">タイムスタンプ</div>
<svg class="a" style="left:610px;top:321px" width="8" height="7" viewBox="0 0 8 7" fill="#95a5a6"><path d="M0 0.5 H8 L4 6.5Z"></path></svg>
<div class="hdiv" style="left:628px"></div>
<div class="a" style="left: 643px; top: 316px; line-height: 16px; font-size: 10.5px; font-weight: bold; color: rgb(84, 91, 100); transform: scaleX(0.9599); transform-origin: 0px 50%;">論理 ID</div>
<div class="hdiv" style="left:778px"></div>
<div class="a" style="left: 793px; top: 316px; line-height: 16px; font-size: 10.61px; font-weight: bold; color: rgb(84, 91, 100); transform: scaleX(0.9273); transform-origin: 0px 50%;">ステータス</div>
<div class="hdiv" style="left:928px"></div>
<div class="a" style="left: 943px; top: 316px; line-height: 16px; font-size: 9.89px; font-weight: bold; color: rgb(84, 91, 100); transform: scaleX(1.0286); transform-origin: 0px 50%;">詳細ステータス</div>
<div class="hdiv" style="left:1078px"></div>
<div class="a" style="left: 1094px; top: 316px; line-height: 16px; font-size: 10.61px; font-weight: bold; color: rgb(84, 91, 100); transform: scaleX(0.9273); transform-origin: 0px 50%;">状況の理由</div>
<div class="a" style="left:480px;top:339px;width:771px;height:1px;background:#eaeded"></div>

<div class="a" style="left: 494px; top: 355.1px; line-height: 16px; font-size: 11px; color: rgb(22, 25, 31); transform: scaleX(0.9985); transform-origin: 0px 50%;">2024-09-28 07:18:29</div>
<div class="a" style="left: 494px; top: 371.7px; line-height: 16px; font-size: 11px; color: rgb(22, 25, 31); transform: scaleX(0.9343); transform-origin: 0px 50%;">UTC+0900</div>
<div class="a" style="left: 643px; top: 346.8px; line-height: 16px; font-size: 11px; color: rgb(22, 25, 31); transform: scaleX(0.9568); transform-origin: 0px 50%;">MySQL-8-Parameter-</div>
<div class="a" style="left: 643px; top: 363.4px; line-height: 16px; font-size: 11px; color: rgb(22, 25, 31); transform: scaleX(0.9964); transform-origin: 0px 50%;">Group-and-Option-</div>
<div class="a" style="left: 643px; top: 380px; line-height: 16px; font-size: 11px; color: rgb(22, 25, 31); transform: scaleX(0.9484); transform-origin: 0px 50%;">Group</div>
<svg class="a" style="left:794px;top:365.4px" width="12" height="12" viewBox="0 0 12 12" fill="none" stroke="#2e7d17" stroke-width="1.4"><circle cx="6" cy="6" r="5.2"></circle><path d="M3.4 6.1 L5.3 7.9 L8.6 4.3" stroke-linecap="round" stroke-linejoin="round"></path></svg>
<div class="a" style="left: 808.5px; top: 363.4px; line-height: 16px; font-size: 11.5px; color: rgb(46, 125, 23); transform: scaleX(0.8185); transform-origin: 0px 50%;">CREATE_COMPLETE</div>
<div class="a" style="left:944px;top:363.4px;line-height:16px;font-size:11px;color:#16191f">-</div>
<div class="a" style="left:1094px;top:363.4px;line-height:16px;font-size:11px;color:#16191f">-</div>
<div class="a" style="left:480px;top:402px;width:771px;height:1px;background:#eaeded"></div>
<div class="a" style="left: 494px; top: 410.1px; line-height: 16px; font-size: 11px; color: rgb(22, 25, 31); transform: scaleX(0.9985); transform-origin: 0px 50%;">2024-09-28 07:18:28</div>
<div class="a" style="left: 494px; top: 426.7px; line-height: 16px; font-size: 11px; color: rgb(22, 25, 31); transform: scaleX(0.9343); transform-origin: 0px 50%;">UTC+0900</div>
<div class="a" style="left: 643px; top: 418.4px; line-height: 16px; font-size: 11px; color: rgb(22, 25, 31); transform: scaleX(0.952); transform-origin: 0px 50%;">MyDBParameterGroup</div>
<svg class="a" style="left:794px;top:420.4px" width="12" height="12" viewBox="0 0 12 12" fill="none" stroke="#2e7d17" stroke-width="1.4"><circle cx="6" cy="6" r="5.2"></circle><path d="M3.4 6.1 L5.3 7.9 L8.6 4.3" stroke-linecap="round" stroke-linejoin="round"></path></svg>
<div class="a" style="left: 808.5px; top: 418.4px; line-height: 16px; font-size: 11.5px; color: rgb(46, 125, 23); transform: scaleX(0.8185); transform-origin: 0px 50%;">CREATE_COMPLETE</div>
<div class="a" style="left:944px;top:418.4px;line-height:16px;font-size:11px;color:#16191f">-</div>
<div class="a" style="left:1094px;top:418.4px;line-height:16px;font-size:11px;color:#16191f">-</div>
<div class="a" style="left:480px;top:449px;width:771px;height:1px;background:#eaeded"></div>
<div class="a" style="left: 494px; top: 457.1px; line-height: 16px; font-size: 11px; color: rgb(22, 25, 31); transform: scaleX(0.9985); transform-origin: 0px 50%;">2024-09-28 07:18:28</div>
<div class="a" style="left: 494px; top: 473.7px; line-height: 16px; font-size: 11px; color: rgb(22, 25, 31); transform: scaleX(0.9343); transform-origin: 0px 50%;">UTC+0900</div>
<div class="a" style="left: 643px; top: 465.4px; line-height: 16px; font-size: 11px; color: rgb(22, 25, 31); transform: scaleX(0.952); transform-origin: 0px 50%;">MyDBParameterGroup</div>
<svg class="a" style="left:794px;top:459.1px" width="12" height="12" viewBox="0 0 12 12"><circle cx="6" cy="6" r="5.2" fill="none" stroke="#2f6dc1" stroke-width="1.4"></circle><circle cx="6" cy="3.4" r="0.9" fill="#2f6dc1"></circle><path d="M4.9 5.2 H6.5 V8.4 H7.3 M4.7 8.6 H7.4" fill="none" stroke="#2f6dc1" stroke-width="1.2"></path></svg>
<div class="a" style="left: 808.5px; top: 457.1px; line-height: 16px; font-size: 11.5px; color: rgb(47, 109, 193); transform: scaleX(0.8111); transform-origin: 0px 50%;">CREATE_IN_PROGRES</div>
<div class="a" style="left: 794px; top: 473.7px; line-height: 16px; font-size: 11.5px; color: rgb(47, 109, 193); transform: scaleX(0.7169); transform-origin: 0px 50%;">S</div>
<div class="a" style="left:944px;top:465.4px;line-height:16px;font-size:11px;color:#16191f">-</div>
<div class="a" style="left: 1093.5px; top: 465.4px; line-height: 16px; font-size: 11px; color: rgb(22, 25, 31); transform: scaleX(0.9629); transform-origin: 0px 50%;">Resource creation Initiated</div>
<div class="a" style="left:480px;top:496px;width:771px;height:1px;background:#eaeded"></div>
<div class="a" style="left: 494px; top: 504.1px; line-height: 16px; font-size: 11px; color: rgb(22, 25, 31); transform: scaleX(0.9985); transform-origin: 0px 50%;">2024-09-28 07:18:27</div>
<div class="a" style="left: 494px; top: 520.7px; line-height: 16px; font-size: 11px; color: rgb(22, 25, 31); transform: scaleX(0.9343); transform-origin: 0px 50%;">UTC+0900</div>
<div class="a" style="left: 643px; top: 512.4px; line-height: 16px; font-size: 11px; color: rgb(22, 25, 31); transform: scaleX(0.9684); transform-origin: 0px 50%;">MyDBOptionGroup</div>
<svg class="a" style="left:794px;top:514.4px" width="12" height="12" viewBox="0 0 12 12" fill="none" stroke="#2e7d17" stroke-width="1.4"><circle cx="6" cy="6" r="5.2"></circle><path d="M3.4 6.1 L5.3 7.9 L8.6 4.3" stroke-linecap="round" stroke-linejoin="round"></path></svg>
<div class="a" style="left: 808.5px; top: 512.4px; line-height: 16px; font-size: 11.5px; color: rgb(46, 125, 23); transform: scaleX(0.8185); transform-origin: 0px 50%;">CREATE_COMPLETE</div>
<div class="a" style="left:944px;top:512.4px;line-height:16px;font-size:11px;color:#16191f">-</div>
<div class="a" style="left:1094px;top:512.4px;line-height:16px;font-size:11px;color:#16191f">-</div>
<div class="a" style="left:480px;top:543px;width:771px;height:1px;background:#eaeded"></div>
<div class="a" style="left: 494px; top: 551.1px; line-height: 16px; font-size: 11px; color: rgb(22, 25, 31); transform: scaleX(0.9985); transform-origin: 0px 50%;">2024-09-28 07:18:27</div>
<div class="a" style="left: 494px; top: 567.7px; line-height: 16px; font-size: 11px; color: rgb(22, 25, 31); transform: scaleX(0.9343); transform-origin: 0px 50%;">UTC+0900</div>
<div class="a" style="left: 643px; top: 559.4px; line-height: 16px; font-size: 11px; color: rgb(22, 25, 31); transform: scaleX(0.9684); transform-origin: 0px 50%;">MyDBOptionGroup</div>
<svg class="a" style="left:794px;top:553.1px" width="12" height="12" viewBox="0 0 12 12"><circle cx="6" cy="6" r="5.2" fill="none" stroke="#2f6dc1" stroke-width="1.4"></circle><circle cx="6" cy="3.4" r="0.9" fill="#2f6dc1"></circle><path d="M4.9 5.2 H6.5 V8.4 H7.3 M4.7 8.6 H7.4" fill="none" stroke="#2f6dc1" stroke-width="1.2"></path></svg>
<div class="a" style="left: 808.5px; top: 551.1px; line-height: 16px; font-size: 11.5px; color: rgb(47, 109, 193); transform: scaleX(0.8111); transform-origin: 0px 50%;">CREATE_IN_PROGRES</div>
<div class="a" style="left: 794px; top: 567.7px; line-height: 16px; font-size: 11.5px; color: rgb(47, 109, 193); transform: scaleX(0.7169); transform-origin: 0px 50%;">S</div>
<div class="a" style="left:944px;top:559.4px;line-height:16px;font-size:11px;color:#16191f">-</div>
<div class="a" style="left: 1093.5px; top: 559.4px; line-height: 16px; font-size: 11px; color: rgb(22, 25, 31); transform: scaleX(0.9629); transform-origin: 0px 50%;">Resource creation Initiated</div>
<div class="a" style="left:480px;top:590px;width:771px;height:1px;background:#eaeded"></div>
<div class="a" style="left: 494px; top: 598.1px; line-height: 16px; font-size: 11px; color: rgb(22, 25, 31); transform: scaleX(0.9985); transform-origin: 0px 50%;">2024-09-28 07:18:26</div>
<div class="a" style="left: 494px; top: 614.7px; line-height: 16px; font-size: 11px; color: rgb(22, 25, 31); transform: scaleX(0.9343); transform-origin: 0px 50%;">UTC+0900</div>
<div class="a" style="left: 643px; top: 606.4px; line-height: 16px; font-size: 11px; color: rgb(22, 25, 31); transform: scaleX(0.952); transform-origin: 0px 50%;">MyDBParameterGroup</div>
<svg class="a" style="left:794px;top:600.1px" width="12" height="12" viewBox="0 0 12 12"><circle cx="6" cy="6" r="5.2" fill="none" stroke="#2f6dc1" stroke-width="1.4"></circle><circle cx="6" cy="3.4" r="0.9" fill="#2f6dc1"></circle><path d="M4.9 5.2 H6.5 V8.4 H7.3 M4.7 8.6 H7.4" fill="none" stroke="#2f6dc1" stroke-width="1.2"></path></svg>
<div class="a" style="left: 808.5px; top: 598.1px; line-height: 16px; font-size: 11.5px; color: rgb(47, 109, 193); transform: scaleX(0.8111); transform-origin: 0px 50%;">CREATE_IN_PROGRES</div>
<div class="a" style="left: 794px; top: 614.7px; line-height: 16px; font-size: 11.5px; color: rgb(47, 109, 193); transform: scaleX(0.7169); transform-origin: 0px 50%;">S</div>
<div class="a" style="left:944px;top:606.4px;line-height:16px;font-size:11px;color:#16191f">-</div>
<div class="a" style="left:1094px;top:606.4px;line-height:16px;font-size:11px;color:#16191f">-</div>
<div class="a" style="left:480px;top:637px;width:771px;height:1px;background:#eaeded"></div>
<div class="a" style="left: 494px; top: 645.1px; line-height: 16px; font-size: 11px; color: rgb(22, 25, 31); transform: scaleX(0.9985); transform-origin: 0px 50%;">2024-09-28 07:18:26</div>
<div class="a" style="left: 494px; top: 661.7px; line-height: 16px; font-size: 11px; color: rgb(22, 25, 31); transform: scaleX(0.9343); transform-origin: 0px 50%;">UTC+0900</div>
<div class="a" style="left: 643px; top: 653.4px; line-height: 16px; font-size: 11px; color: rgb(22, 25, 31); transform: scaleX(0.9684); transform-origin: 0px 50%;">MyDBOptionGroup</div>
<svg class="a" style="left:794px;top:647.1px" width="12" height="12" viewBox="0 0 12 12"><circle cx="6" cy="6" r="5.2" fill="none" stroke="#2f6dc1" stroke-width="1.4"></circle><circle cx="6" cy="3.4" r="0.9" fill="#2f6dc1"></circle><path d="M4.9 5.2 H6.5 V8.4 H7.3 M4.7 8.6 H7.4" fill="none" stroke="#2f6dc1" stroke-width="1.2"></path></svg>
<div class="a" style="left: 808.5px; top: 645.1px; line-height: 16px; font-size: 11.5px; color: rgb(47, 109, 193); transform: scaleX(0.8111); transform-origin: 0px 50%;">CREATE_IN_PROGRES</div>
<div class="a" style="left: 794px; top: 661.7px; line-height: 16px; font-size: 11.5px; color: rgb(47, 109, 193); transform: scaleX(0.7169); transform-origin: 0px 50%;">S</div>
<div class="a" style="left:944px;top:653.4px;line-height:16px;font-size:11px;color:#16191f">-</div>
<div class="a" style="left:1094px;top:653.4px;line-height:16px;font-size:11px;color:#16191f">-</div>
<div class="a" style="left:480px;top:684px;width:771px;height:1px;background:#eaeded"></div>
<div class="a" style="left: 494px; top: 701.1px; line-height: 16px; font-size: 11px; color: rgb(22, 25, 31); transform: scaleX(0.9985); transform-origin: 0px 50%;">2024-09-28 07:18:23</div>
<div class="a" style="left: 494px; top: 717.7px; line-height: 16px; font-size: 11px; color: rgb(22, 25, 31); transform: scaleX(0.9343); transform-origin: 0px 50%;">UTC+0900</div>
<div class="a" style="left: 643px; top: 692.8px; line-height: 16px; font-size: 11px; color: rgb(22, 25, 31); transform: scaleX(0.9568); transform-origin: 0px 50%;">MySQL-8-Parameter-</div>
<div class="a" style="left: 643px; top: 709.4px; line-height: 16px; font-size: 11px; color: rgb(22, 25, 31); transform: scaleX(0.9964); transform-origin: 0px 50%;">Group-and-Option-</div>
<div class="a" style="left: 643px; top: 726px; line-height: 16px; font-size: 11px; color: rgb(22, 25, 31); transform: scaleX(0.9484); transform-origin: 0px 50%;">Group</div>
<svg class="a" style="left:794px;top:703.1px" width="12" height="12" viewBox="0 0 12 12"><circle cx="6" cy="6" r="5.2" fill="none" stroke="#2f6dc1" stroke-width="1.4"></circle><circle cx="6" cy="3.4" r="0.9" fill="#2f6dc1"></circle><path d="M4.9 5.2 H6.5 V8.4 H7.3 M4.7 8.6 H7.4" fill="none" stroke="#2f6dc1" stroke-width="1.2"></path></svg>
<div class="a" style="left: 808.5px; top: 701.1px; line-height: 16px; font-size: 11.5px; color: rgb(47, 109, 193); transform: scaleX(0.8111); transform-origin: 0px 50%;">CREATE_IN_PROGRES</div>
<div class="a" style="left: 794px; top: 717.7px; line-height: 16px; font-size: 11.5px; color: rgb(47, 109, 193); transform: scaleX(0.7169); transform-origin: 0px 50%;">S</div>
<div class="a" style="left:944px;top:709.4px;line-height:16px;font-size:11px;color:#16191f">-</div>
<div class="a" style="left: 1093.5px; top: 709.4px; line-height: 16px; font-size: 11px; color: rgb(22, 25, 31); transform: scaleX(0.9875); transform-origin: 0px 50%;">User Initiated</div>
<div class="a" style="left:459px;top:512px;width:2px;height:10px;background:#5f6b7a"></div>
<div class="a" style="left:463px;top:512px;width:2px;height:10px;background:#5f6b7a"></div>


</body></html>
